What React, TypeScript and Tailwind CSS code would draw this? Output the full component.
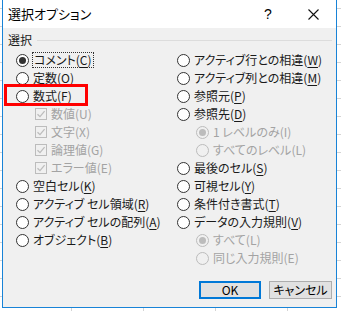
import type { ReactNode } from "react";

const font = "font-['Noto_Sans_CJK_JP','Noto_Sans',sans-serif] [font-feature-settings:'palt']";

function Radio({ checked, disabled }: { checked?: boolean; disabled?: boolean }) {
  return (
    <span
      className={`flex h-[13px] w-[13px] shrink-0 items-center justify-center rounded-full border ${
        disabled ? "border-[#bcbcbc] bg-[#f0f0f0]" : "border-[#333333] bg-white"
      }`}
    >
      {checked && (
        <span
          className={`h-[7px] w-[7px] rounded-full ${disabled ? "bg-[#bcbcbc]" : "bg-[#333333]"}`}
        />
      )}
    </span>
  );
}

function Check() {
  return (
    <span className="flex h-[12px] w-[12px] shrink-0 items-center justify-center border border-[#bcbcbc] bg-[#f0f0f0]">
      <svg width="10" height="10" viewBox="0 0 10 10">
        <path d="M1.5 5.2 L4 7.6 L8.6 2.2" fill="none" stroke="#bcbcbc" strokeWidth="1.3" />
      </svg>
    </span>
  );
}

function Label({ text, k, disabled }: { text: string; k: string; disabled?: boolean }) {
  return (
    <span className={`whitespace-nowrap ${disabled ? "text-[#a3a3a3]" : "text-[#1a1a1a]"}`}>
      {text}(
      {disabled ? k : <u className="underline-offset-2">{k}</u>})
    </span>
  );
}

function Row({ children, indent, extra }: { children: ReactNode; indent?: boolean; extra?: ReactNode }) {
  return (
    <div className={`relative flex h-[18px] items-center gap-[4px] ${indent ? "pl-[19px]" : ""}`}>
      {children}
      {extra}
    </div>
  );
}

export default function App() {
  return (
    <div
      className={`h-[311px] w-[341px] overflow-hidden bg-white bg-[linear-gradient(to_bottom,transparent_8px,#d4d4d4_8px,#d4d4d4_9px,transparent_9px),linear-gradient(to_right,transparent_71px,#d4d4d4_71px,#d4d4d4_72px,transparent_72px)] bg-[length:72px_18px] pl-[2px] ${font} text-[12px]`}
    >
      <div className="flex h-[308px] w-[335px] flex-col border-x border-b border-[#1883d7]">
        <div className="flex h-[28px] shrink-0 items-center bg-white pl-[5px] text-[13px] text-black">
          <span className="flex-1 whitespace-nowrap">選択オプション</span>
          <span className="w-[20px] text-center font-['Liberation_Sans',sans-serif] text-[14px]">?</span>
          <span className="ml-[13px] flex w-[45px] items-center justify-center">
            <svg width="11" height="11" viewBox="0 0 11 11">
              <path d="M0.5 0.5 L10.5 10.5 M10.5 0.5 L0.5 10.5" stroke="#111" strokeWidth="1.1" />
            </svg>
          </span>
        </div>

        <div className="flex flex-1 flex-col bg-[#f0f0f0]">
          <div className="mt-[3px] flex h-[18px] items-center pl-[5px] pr-[4px]">
            <span className="text-[#1a1a1a]">選択</span>
            <span className="ml-[5px] h-px flex-1 bg-[#dcdcdc]" />
          </div>

          <div className="mt-[2px] grid grid-cols-[161px_1fr] pl-[13px]">
            <div className="flex flex-col">
              <Row>
                <Radio checked />
                <span className="-ml-[1px] border border-dotted border-[#333] px-[1px] leading-[14px]">
                  <Label text="コメント" k="C" />
                </span>
              </Row>
              <Row>
                <Radio />
                <Label text="定数" k="O" />
              </Row>
              <Row
                extra={
                  <span className="pointer-events-none absolute -left-[12px] -top-[3px] h-[22px] w-[84px] border-[3px] border-[#ff0000]" />
                }
              >
                <Radio />
                <Label text="数式" k="F" />
              </Row>
              <Row indent>
                <Check />
                <Label text="数値" k="U" disabled />
              </Row>
              <Row indent>
                <Check />
                <Label text="文字" k="X" disabled />
              </Row>
              <Row indent>
                <Check />
                <Label text="論理値" k="G" disabled />
              </Row>
              <Row indent>
                <Check />
                <Label text="エラー値" k="E" disabled />
              </Row>
              <Row>
                <Radio />
                <Label text="空白セル" k="K" />
              </Row>
              <Row>
                <Radio />
                <Label text="アクティブ セル領域" k="R" />
              </Row>
              <Row>
                <Radio />
                <Label text="アクティブ セルの配列" k="A" />
              </Row>
              <Row>
                <Radio />
                <Label text="オブジェクト" k="B" />
              </Row>
            </div>

            <div className="flex flex-col">
              <Row>
                <Radio />
                <Label text="アクティブ行との相違" k="W" />
              </Row>
              <Row>
                <Radio />
                <Label text="アクティブ列との相違" k="M" />
              </Row>
              <Row>
                <Radio />
                <Label text="参照元" k="P" />
              </Row>
              <Row>
                <Radio />
                <Label text="参照先" k="D" />
              </Row>
              <Row indent>
                <Radio checked disabled />
                <Label text="1 レベルのみ" k="I" disabled />
              </Row>
              <Row indent>
                <Radio disabled />
                <Label text="すべてのレベル" k="L" disabled />
              </Row>
              <Row>
                <Radio />
                <Label text="最後のセル" k="S" />
              </Row>
              <Row>
                <Radio />
                <Label text="可視セル" k="Y" />
              </Row>
              <Row>
                <Radio />
                <Label text="条件付き書式" k="T" />
              </Row>
              <Row>
                <Radio />
                <Label text="データの入力規則" k="V" />
              </Row>
              <Row indent>
                <Radio checked disabled />
                <Label text="すべて" k="L" disabled />
              </Row>
              <Row indent>
                <Radio disabled />
                <Label text="同じ入力規則" k="E" disabled />
              </Row>
            </div>
          </div>

          <div className="mt-auto mb-[8px] flex justify-end gap-[8px] pr-[4px]">
            <button className="flex h-[18px] w-[62px] items-center justify-center border-2 border-[#0078d7] bg-[#e1e1e1] text-[12px] text-black">
              OK
            </button>
            <button className="flex h-[18px] w-[63px] items-center justify-center border border-[#adadad] bg-[#e1e1e1] text-[12px] text-black">
              キャンセル
            </button>
          </div>
        </div>
      </div>
    </div>
  );
}
